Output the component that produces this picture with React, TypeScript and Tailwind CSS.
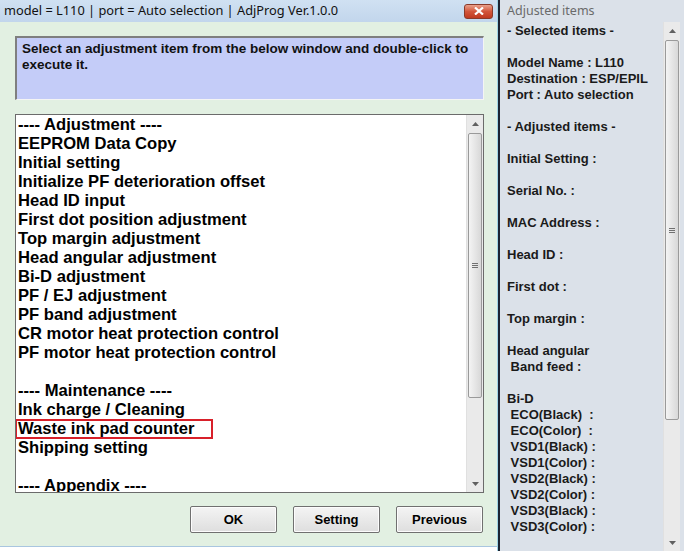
import React from "react";

const items = [
  "---- Adjustment ----",
  "EEPROM Data Copy",
  "Initial setting",
  "Initialize PF deterioration offset",
  "Head ID input",
  "First dot position adjustment",
  "Top margin adjustment",
  "Head angular adjustment",
  "Bi-D adjustment",
  "PF / EJ adjustment",
  "PF band adjustment",
  "CR motor heat protection control",
  "PF motor heat protection control",
  "",
  "---- Maintenance ----",
  "Ink charge / Cleaning",
  "Waste ink pad counter",
  "Shipping setting",
  "",
  "---- Appendix ----",
];

const adjusted = [
  "- Selected items -",
  "",
  "Model Name : L110",
  "Destination : ESP/EPIL",
  "Port : Auto selection",
  "",
  "- Adjusted items -",
  "",
  "Initial Setting :",
  "",
  "Serial No. :",
  "",
  "MAC Address :",
  "",
  "Head ID :",
  "",
  "First dot :",
  "",
  "Top margin :",
  "",
  "Head angular",
  " Band feed :",
  "",
  "Bi-D",
  " ECO(Black)  :",
  " ECO(Color)  :",
  " VSD1(Black) :",
  " VSD1(Color) :",
  " VSD2(Black) :",
  " VSD2(Color) :",
  " VSD3(Black) :",
  " VSD3(Color) :",
];

function ScrollBar({ thumbTop, thumbHeight }: { thumbTop: number; thumbHeight: number }) {
  return (
    <div className="relative flex h-full w-[17px] flex-col items-center bg-[#eaeaea] border-l border-[#e0e0e0]">
      <div className="flex h-[17px] w-full items-center justify-center">
        <svg width="7" height="4" viewBox="0 0 7 4">
          <path d="M0 4 L3.5 0 L7 4 Z" fill="#606060" />
        </svg>
      </div>
      <div
        className="absolute left-[1px] right-[1px] flex items-center justify-center rounded-[2px] border border-[#9a9a9a] bg-gradient-to-r from-[#f4f4f4] to-[#d8d8d8]"
        style={{ top: thumbTop, height: thumbHeight }}
      >
        <div className="flex flex-col gap-[1px]">
          <div className="h-px w-[6px] bg-[#707070]" />
          <div className="h-px w-[6px] bg-[#707070]" />
          <div className="h-px w-[6px] bg-[#707070]" />
        </div>
      </div>
      <div className="mt-auto flex h-[17px] w-full items-center justify-center">
        <svg width="7" height="4" viewBox="0 0 7 4">
          <path d="M0 0 L3.5 4 L7 0 Z" fill="#606060" />
        </svg>
      </div>
    </div>
  );
}

function Button({ label }: { label: string }) {
  return (
    <button className="h-[27px] w-[87px] rounded-[2px] border border-[#707070] bg-gradient-to-b from-[#f4f4f4] to-[#dedede] text-[13px] font-bold text-black shadow-[inset_0_0_0_1px_#fcfcfc]">
      {label}
    </button>
  );
}

export default function App() {
  return (
    <div
      className="flex h-[551px] w-[684px] overflow-hidden bg-white"
      style={{ fontFamily: '"Liberation Sans", Arial, sans-serif' }}
    >
      {/* main window */}
      <div className="flex h-[551px] w-[497px] flex-col bg-[#e2f0e2]">
        <div className="flex h-[22px] items-center justify-between bg-gradient-to-b from-[#d0e1f2] to-[#c2d6ec] pl-[4px] pr-[4px]">
          <span
            className="text-[12.8px] text-[#111]"
            style={{ fontFamily: '"Noto Sans", "Noto Sans CJK SC", sans-serif' }}
          >
            model = L110 | port = Auto selection | AdjProg Ver.1.0.0
          </span>
          <div className="flex h-[15px] w-[29px] items-center justify-center rounded-[3px] border border-[#8a3a2a] bg-gradient-to-b from-[#e8a08c] via-[#d2553a] to-[#c0391f]">
            <svg width="10" height="8" viewBox="0 0 10 8">
              <path d="M1 0.5 L9 7.5 M9 0.5 L1 7.5" stroke="white" strokeWidth="2.2" />
            </svg>
          </div>
        </div>

        <div className="flex flex-1 flex-col pl-[15px] pr-[13px] pt-[14px]">
          <div className="h-[64px] whitespace-nowrap border-t-2 border-l-2 border-[#7f7f7f] border-b border-r border-b-[#f4f4f4] border-r-[#f4f4f4] bg-[#c4ccf8] px-[5px] pt-[3px] text-[13.5px] font-bold leading-[16px] text-[#111]">
            Select an adjustment item from the below window and double-click to
            <br />
            execute it.
          </div>

          <div className="mt-[14px] flex h-[379px] border border-[#6b6b6b] bg-white">
            <div className="flex-1 overflow-hidden">
              {items.map((t, i) => (
                <div
                  key={i}
                  className="relative h-[19px] whitespace-pre pl-[2px] text-[16.6px] font-bold leading-[19px] text-black"
                >
                  {t}
                  {t === "Waste ink pad counter" && (
                    <span className="absolute left-[-1px] top-0 h-[20px] w-[198px] border-2 border-[#d8202a]" />
                  )}
                </div>
              ))}
            </div>
            <ScrollBar thumbTop={18} thumbHeight={265} />
          </div>

          <div className="mt-[13px] flex justify-end gap-[16px] pr-[1px]">
            <Button label="OK" />
            <Button label="Setting" />
            <Button label="Previous" />
          </div>
        </div>
        <div className="h-[5px] border-t border-[#a9c6e0] bg-white" />
      </div>

      {/* divider */}
      <div className="w-[1px] bg-[#9fd4e6]" />
      <div className="w-[2px] bg-[#1c2433]" />

      {/* adjusted items panel */}
      <div className="flex flex-1 flex-col bg-[#dbe1e9]">
        <div
          className="flex h-[22px] items-center pl-[7px] text-[12.5px] text-[#6a6a6a]"
          style={{ fontFamily: '"Noto Sans", "Noto Sans CJK SC", sans-serif' }}
        >
          Adjusted items
        </div>
        <div className="flex flex-1 pr-[4px]">
          <div className="flex-1 overflow-hidden pl-[7px] pt-[1px]">
            {adjusted.map((t, i) => (
              <div
                key={i}
                className="h-[16px] whitespace-pre text-[13px] font-bold leading-[16px] text-[#1a1a1a]"
              >
                {t}
              </div>
            ))}
          </div>
          <ScrollBar thumbTop={18} thumbHeight={380} />
        </div>
      </div>
    </div>
  );
}
